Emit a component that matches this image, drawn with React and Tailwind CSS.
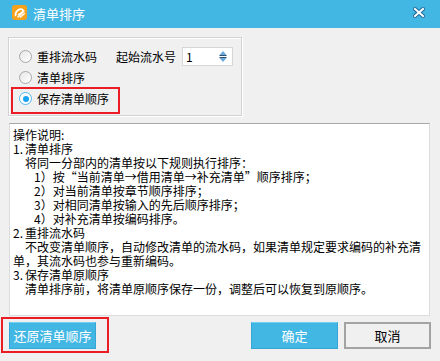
import React, { useState } from 'react';

const FONT = { fontFamily: '"Noto Sans CJK SC", "Noto Sans", sans-serif' };

function Radio({ checked }) {
  if (checked) {
    return (
      <span className="w-[13px] h-[13px] rounded-full border border-[#4fb8ee] bg-white flex items-center justify-center shrink-0">
        <span className="w-[6px] h-[6px] rounded-full bg-[#1aa3f0]" />
      </span>
    );
  }
  return (
    <span className="w-[13px] h-[13px] rounded-full border border-[#a8a8a8] bg-gradient-to-br from-[#e6e6e6] to-white shrink-0" />
  );
}

function Logo() {
  return (
    <svg width="15" height="15" viewBox="0 0 15 15">
      <rect x="0" y="0" width="15" height="15" rx="3" fill="#f5a11c" />
      <path d="M3.5 10.5 C3 6, 8 3, 10.5 4.5 C12 5.5, 10 8.5, 6.5 9.5" fill="none" stroke="#fff" strokeWidth="1.7" strokeLinecap="round" />
      <path d="M6 12 L12 6 M8.5 12 L12.5 8.5" fill="none" stroke="#fff" strokeWidth="1.5" strokeLinecap="round" />
    </svg>
  );
}

function CloseIcon() {
  return (
    <svg width="12" height="11" viewBox="0 0 12 11">
      <path d="M2 2 L10 9 M10 2 L2 9" stroke="#1f6c99" strokeWidth="4" strokeLinecap="square" />
      <path d="M2 2 L10 9 M10 2 L2 9" stroke="#fff" strokeWidth="2" strokeLinecap="square" />
    </svg>
  );
}

function SpinArrows() {
  return (
    <svg width="8" height="13" viewBox="0 0 8 13">
      <path d="M0.5 5 L4 1 L7.5 5 Z" fill="#6aa9dc" />
      <path d="M0.5 5.5 H7.5" stroke="#2f4f6b" strokeWidth="1" />
      <path d="M0.5 7.5 H7.5" stroke="#2f4f6b" strokeWidth="1" />
      <path d="M0.5 8 L7.5 8 L4 12 Z" fill="#6aa9dc" />
    </svg>
  );
}

function Num({ children }) {
  return <span className="inline-block w-[12px]">{children}</span>;
}

function Wide({ children, right }) {
  return (
    <span className={right ? 'inline-block w-[12px] text-right' : 'inline-block w-[12px] text-left'}>
      {children}
    </span>
  );
}

export default function App() {
  const [mode, setMode] = useState('keep');
  const [start, setStart] = useState('1');

  return (
    <div className="w-[440px] h-[361px] bg-[#f0f0f0] flex flex-col overflow-hidden text-black" style={FONT}>
      {/* title bar */}
      <div className="h-[28px] bg-[#43b7e4] flex items-center shrink-0">
        <div className="ml-[12px] -mt-[3px]">
          <Logo />
        </div>
        <span className="ml-[6px] text-[13px] text-white -mt-[1px]">清单排序</span>
        <div className="ml-auto mr-[15px] -mt-[3px]">
          <CloseIcon />
        </div>
      </div>

      {/* group box */}
      <div className="relative mt-[9px] ml-[8px] w-[234px] h-[79px] border border-[#d3d3d3] shadow-[inset_1px_1px_0_#fff,1px_1px_0_#fff] pt-[8px] pl-[10px] flex flex-col text-[12px]">
        <div className="h-[21px] flex items-center" onClick={() => setMode('renum')}>
          <Radio checked={mode === 'renum'} />
          <span className="ml-[5px]">重排流水码</span>
          <span className="ml-[19px]">起始流水号</span>
          <div className="ml-[6px] w-[51px] h-[19px] bg-white border border-[#d6d6d6] flex items-center pl-[3px] pr-[5px]">
            <input
              value={start}
              onChange={(e) => setStart(e.target.value)}
              className="w-[30px] text-[12px] outline-none bg-transparent"
            />
            <span className="ml-auto flex">
              <SpinArrows />
            </span>
          </div>
        </div>
        <div className="h-[21px] flex items-center" onClick={() => setMode('sort')}>
          <Radio checked={mode === 'sort'} />
          <span className="ml-[5px]">清单排序</span>
        </div>
        <div className="h-[21px] flex items-center" onClick={() => setMode('keep')}>
          <Radio checked={mode === 'keep'} />
          <span className="ml-[5px]">保存清单顺序</span>
        </div>
        {/* red annotation */}
        <div className="absolute left-[2px] top-[49px] w-[109px] h-[27px] border-2 border-[#ec1c24] pointer-events-none" />
      </div>

      {/* description */}
      <div className="mt-[7px] ml-[9px] w-[421px] h-[193px] bg-white border border-[#dcdcdc] border-t-[#a8a8a8] pt-[4px] pl-[3px] text-[12px] leading-[14px] whitespace-nowrap">
        <div>操作说明:</div>
        <div><Num>1.</Num>清单排序</div>
        <div className="pl-[12px]">将同一分部内的清单按以下规则执行排序：</div>
        <div className="pl-[21px]">
          1）按<Wide right>“</Wide>当前清单→借用清单→补充清单<Wide>”</Wide>顺序排序；
        </div>
        <div className="pl-[21px]">2）对当前清单按章节顺序排序；</div>
        <div className="pl-[21px]">3）对相同清单按输入的先后顺序排序；</div>
        <div className="pl-[21px]">4）对补充清单按编码排序。</div>
        <div><Num>2.</Num>重排流水码</div>
        <div className="pl-[12px]">不改变清单顺序，自动修改清单的流水码，如果清单规定要求编码的补充清</div>
        <div>单，其流水码也参与重新编码。</div>
        <div><Num>3.</Num>保存清单原顺序</div>
        <div className="pl-[12px]">清单排序前，将清单原顺序保存一份，调整后可以恢复到原顺序。</div>
      </div>

      {/* buttons */}
      <div className="mt-[6px] px-[9px] flex items-center text-[13px]">
        <div className="relative">
          <button className="w-[87px] h-[27px] bg-[#43b7e4] border border-[#36a6d6] border-t-[#6fd0f4] text-white">
            还原清单顺序
          </button>
          <div className="absolute -left-[8px] -top-[5px] w-[108px] h-[36px] border-2 border-[#ec1c24] pointer-events-none" />
        </div>
        <button className="ml-auto w-[87px] h-[27px] bg-[#43b7e4] border border-[#36a6d6] border-t-[#6fd0f4] text-white">
          确定
        </button>
        <button className="ml-[6px] w-[87px] h-[27px] bg-[#f0f0f0] border-2 border-[#a3a3a3]">
          取消
        </button>
      </div>
    </div>
  );
}
